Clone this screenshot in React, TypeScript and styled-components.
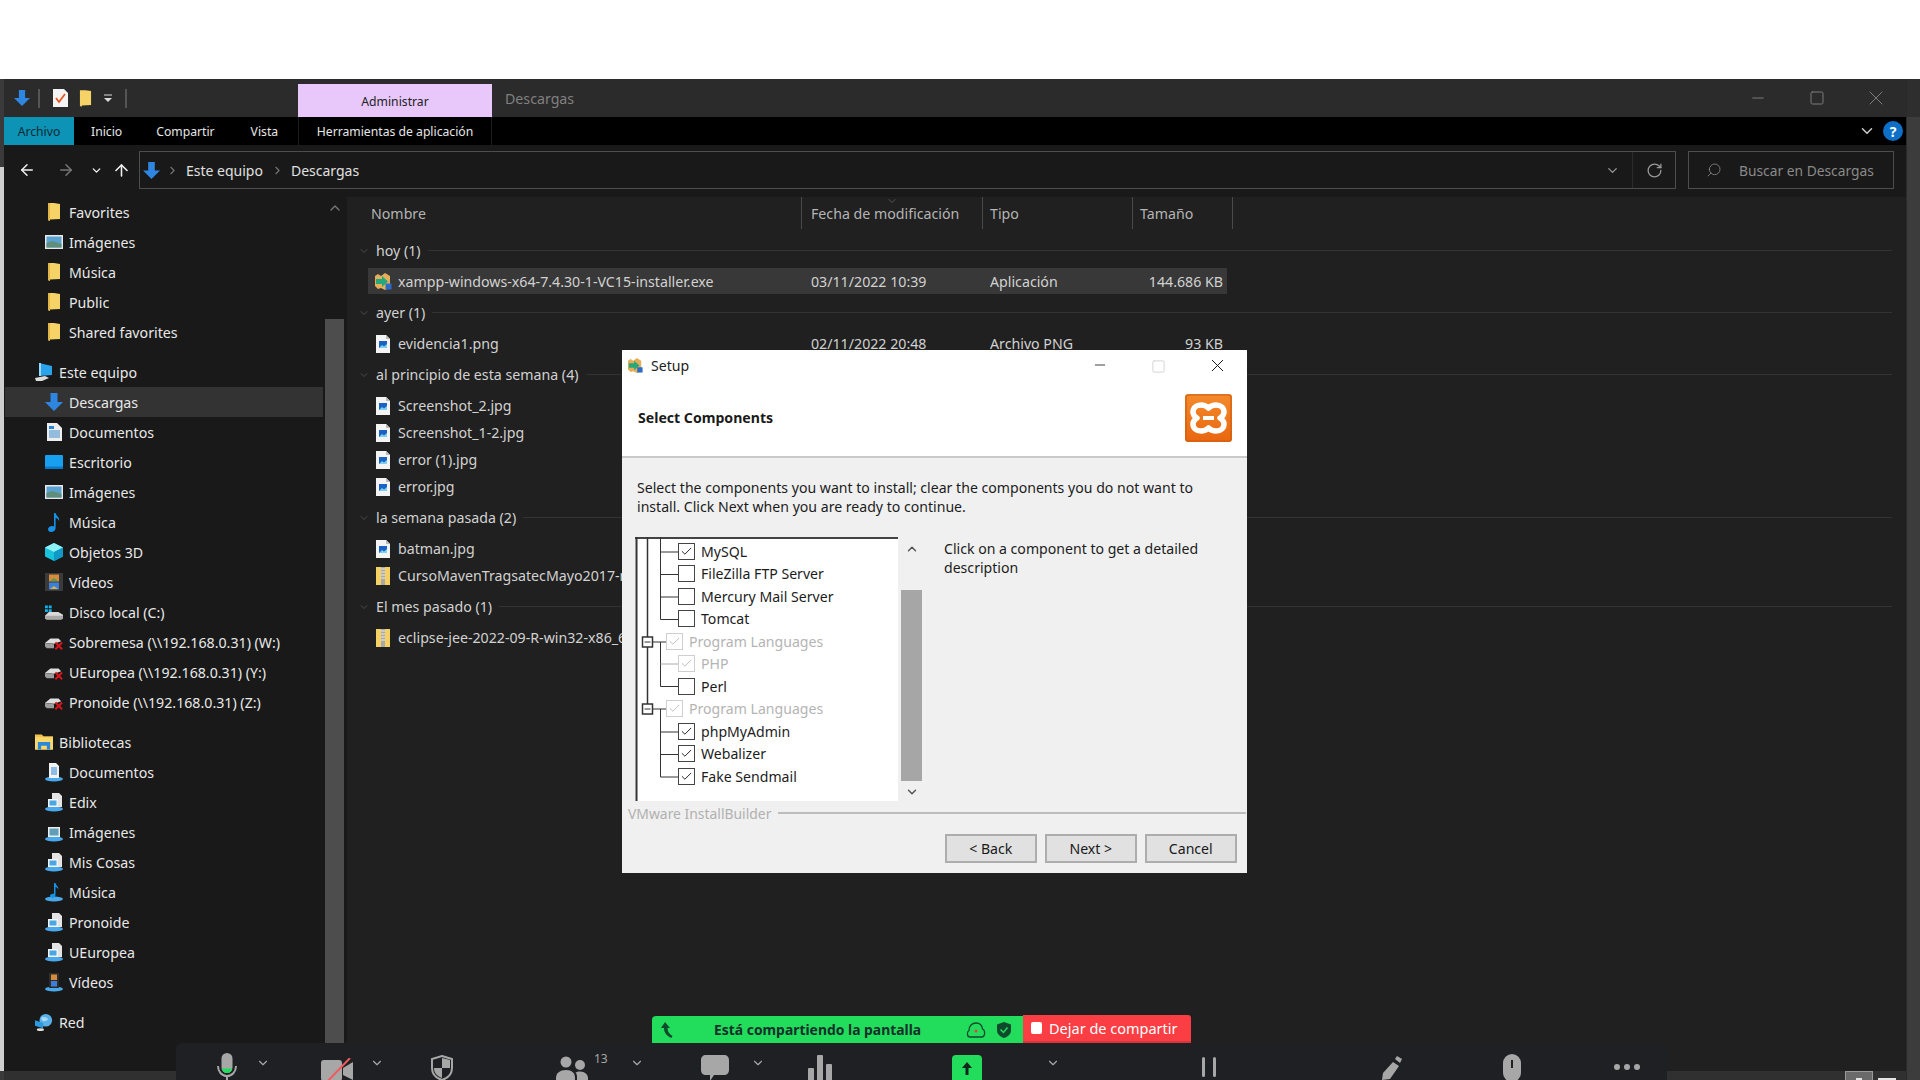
import React from 'react';
import styled, { createGlobalStyle } from 'styled-components';
import { ChevronDown, ChevronUp, ChevronRight, ArrowLeft, ArrowRight, ArrowUp, RotateCw, Search, Minus, Square, X, Check } from 'lucide-react';

const Global = createGlobalStyle`
  html, body { margin: 0; padding: 0; background: #fff; }
  * { box-sizing: border-box; }
  #root { width: 1920px; height: 1080px; }
`;
const FONT = `"Noto Sans", "Open Sans", sans-serif`;

const Page = styled.div`
  position: relative; width: 1920px; height: 1080px; overflow: hidden; background: #fff;
  font-family: ${FONT}; display: flex; flex-direction: column;
`;
const TopStrip = styled.div`height: 79px; flex: none; background: #fff;`;
const Desk = styled.div`flex: 1; display: flex; min-height: 0;`;
const LeftEdge = styled.div`
  width: 4px; flex: none;
  background: linear-gradient(#3a3a3a 0, #3a3a3a 88px, #cfcfcf 88px, #cfcfcf 992px, #3a3a3a 992px);
`;
const RightEdge = styled.div`
  width: 14px; flex: none; border-left: 1px solid #2a2a2a;
  background: linear-gradient(#2e2e2e 0, #2e2e2e 38px, #3c3c3c 38px);
`;
const Explorer = styled.div`flex: 1; display: flex; flex-direction: column; min-width: 0; background: #191919;`;

const TitleBar = styled.div`height: 38px; flex: none; background: #2b2b2b; display: flex; align-items: stretch;`;
const Quick = styled.div`width: 294px; flex: none; display: flex; align-items: center; padding-left: 10px;`;
const QSep = styled.div<{ $ml: number }>`width: 2px; height: 19px; background: #555; margin-left: ${p => p.$ml}px;`;
const QIcon = styled.div<{ $ml: number }>`margin-left: ${p => p.$ml}px; display: flex;`;
const AdminTab = styled.div`
  width: 194px; margin-top: 5px; background: #e8c8fa; color: #222; font-size: 12.2px;
  display: flex; align-items: center; justify-content: center; padding-top: 1px;
`;
const WinTitle = styled.div`margin-left: 13px; color: #808080; font-size: 14.2px; display: flex; align-items: center; flex: 1;`;
const WinBtn = styled.div`width: 59px; display: flex; align-items: center; justify-content: center; color: #7c7c7c;`;
const WinBtns = styled.div`display: flex; padding-right: 1px;`;

const Tabs = styled.div`height: 28px; flex: none; background: #000; display: flex; align-items: stretch; color: #e6e6e6; font-size: 12.2px; padding-right: 3px;`;
const FileTab = styled.div`width: 70px; background: #0c93b5; color: #0c2a33; display: flex; align-items: center; justify-content: center;`;
const TabList = styled.div`width: 224px; flex: none; display: flex;`;
const Tab = styled.div<{ $ml: number }>`margin-left: ${p => p.$ml}px; display: flex; align-items: center;`;
const ToolTab = styled.div`
  width: 194px; flex: none; border-left: 1px solid #1e1e1e; border-right: 1px solid #1e1e1e;
  display: flex; align-items: center; justify-content: center;
`;
const TabSpacer = styled.div`flex: 1;`;
const TabChevron = styled.div`display: flex; align-items: center; color: #ccc; margin-right: 7px;`;
const Help = styled.div`
  width: 20px; height: 20px; border-radius: 50%; background: #0d6fc8; color: #fff; font-weight: 700; font-size: 14px;
  align-self: center; display: flex; align-items: center; justify-content: center;
`;

const AddressBar = styled.div`height: 52px; flex: none; display: flex; padding-top: 6px; align-items: flex-start; padding-right: 12px;`;
const Nav = styled.div`width: 135px; flex: none; height: 38px; display: flex; align-items: center; color: #fff; padding-left: 14px;`;
const NavIcon = styled.div<{ $ml: number; $dim?: boolean }>`margin-left: ${p => p.$ml}px; display: flex; color: ${p => (p.$dim ? '#777' : '#f0f0f0')};`;
const AddrBox = styled.div`
  flex: 1; height: 38px; border: 1px solid #4d4d4d; display: flex; align-items: center; color: #e0e0e0; font-size: 14px; padding-left: 3px;
`;
const Crumb = styled.span`margin: 0 2px 0 0;`;
const CrumbSep = styled.span`display: flex; color: #777; margin: 0 7px 0 6px;`;
const AddrSpacer = styled.div`flex: 1;`;
const AddrBtn = styled.div<{ $w: number; $line?: boolean }>`
  width: ${p => p.$w}px; height: 100%; flex: none; display: flex; align-items: center; justify-content: center; color: #9a9a9a;
  ${p => (p.$line ? 'border-left: 1px solid #2c2c2c;' : '')}
`;
const SearchBox = styled.div`
  width: 206px; margin-left: 12px; height: 38px; border: 1px solid #4d4d4d; display: flex; align-items: center;
  color: #8a8a8a; font-size: 13.8px; padding-left: 17px; gap: 17px;
`;

const Main = styled.div`flex: 1; display: flex; min-height: 0;`;
const NavPane = styled.div`width: 321px; flex: none; padding: 0 2px 0 1px; display: flex; flex-direction: column; gap: 10px;`;
const NavGroup = styled.div`display: flex; flex-direction: column;`;
const NavRow = styled.div<{ $top?: boolean; $sel?: boolean }>`
  height: 30px; display: flex; align-items: center; color: #e8e8e8; font-size: 14.2px; white-space: nowrap;
  background: ${p => (p.$sel ? '#333' : 'transparent')};
  padding-left: ${p => (p.$top ? 30 : 40)}px;
`;
const NavGlyph = styled.div`width: 18px; height: 20px; flex: none; display: flex; align-items: center; justify-content: center; margin-right: 6px;`;
const NavScroll = styled.div`width: 19px; flex: none; display: flex; flex-direction: column; align-items: center; margin-right: 3px; color: #777; padding-top: 3px;`;
const ScrollThumb = styled.div`width: 100%; flex: 1; background: #4d4d4d; margin-top: 103px;`;

const Content = styled.div`flex: 1; background: #202020; display: flex; flex-direction: column; min-width: 0;`;
const Head = styled.div`height: 32px; flex: none; display: grid; grid-template-columns: 455px 181px 150px 100px; color: #b4b4b4; font-size: 14.2px;`;
const HeadCell = styled.div<{ $pl: number }>`
  position: relative; display: flex; align-items: center; padding-left: ${p => p.$pl}px;
  border-right: 1px solid #4a4a4a;
`;
const SortCaret = styled.div`position: absolute; top: -2px; left: 84px; color: #888; display: flex;`;
const Groups = styled.div`margin-top: 4px; display: flex; flex-direction: column;`;
const GroupHead = styled.div`height: 35px; display: flex; align-items: center; padding-left: 11px; padding-right: 14px; color: #d2d2d2; font-size: 14.2px;`;
const GroupChev = styled.div`display: flex; color: #666; margin-right: 6px;`;
const GroupLine = styled.div`flex: 1; height: 1px; background: #333; margin-left: 7px;`;
const FileRow = styled.div<{ $sel?: boolean }>`
  height: 27px; margin-left: 21px; width: 859px; display: grid; grid-template-columns: 434px 181px 150px 94px;
  align-items: center; color: #d2d2d2; font-size: 14.2px; white-space: nowrap;
  background: ${p => (p.$sel ? 'linear-gradient(#383838 0 26px, transparent 26px)' : 'transparent')};
`;
const FileName = styled.div`display: flex; align-items: center; padding-left: 8px; gap: 8px; overflow: hidden;`;
const FileGlyph = styled.div`width: 14px; flex: none; display: flex; justify-content: center;`;
const FileCell = styled.div<{ $pl?: number; $right?: boolean }>`
  padding-left: ${p => p.$pl ?? 0}px; ${p => (p.$right ? 'text-align: right; padding-right: 4px;' : '')}
`;

const StatusBar = styled.div`height: 9px; flex: none; background: #303030; display: flex; justify-content: flex-end; padding-right: 10px; gap: 5px;`;
const ViewBtn = styled.div<{ $on?: boolean }>`
  width: ${p => (p.$on ? 28 : 18)}px; background: ${p => (p.$on ? '#6a6a6a' : 'transparent')};
  border: ${p => (p.$on ? '1px solid #999' : 'none')}; border-bottom: none; display: flex; justify-content: center;
  padding-top: ${p => (p.$on ? 6 : 7)}px;
`;
const ViewMark = styled.div<{ $w: number }>`width: ${p => p.$w}px; height: 2px; background: #e4e4e4;`;

/* Setup dialog: a window floating on the desktop */
const Dialog = styled.div`
  position: absolute; left: 622px; top: 350px; width: 625px; height: 523px; background: #f0f0f0;
  display: flex; flex-direction: column; color: #1c1c1c; font-size: 14.1px;
`;
const DlgTitle = styled.div`height: 32px; flex: none; background: #fff; display: flex; align-items: center; padding: 0 0 2px 6px; color: #222;`;
const DlgTitleText = styled.div`margin-left: 8px; flex: 1;`;
const DlgBtn = styled.div<{ $dim?: boolean }>`
  width: 59px; display: flex; justify-content: center; color: ${p => (p.$dim ? '#c8c8c8' : '#111')};
  ${p => (p.$dim ? 'margin-top: 2px;' : '')}
`;
const DlgBtns = styled.div`display: flex; align-items: center;`;
const DlgHeader = styled.div`height: 76px; flex: none; background: #fff; border-bottom: 2px solid #c9c9c9; display: flex; padding: 12px 15px 0 16px; justify-content: space-between; align-items: flex-start;`;
const DlgHeading = styled.div`font-weight: 700; margin-top: 14px; color: #1a1a1a;`;
const DlgIntro = styled.div`padding: 20px 0 0 15px; line-height: 19px; height: 79px; flex: none; white-space: nowrap;`;
const DlgMid = styled.div`display: flex; height: 264px; flex: none; padding-left: 13px;`;
const TreeBox = styled.div`
  position: relative; width: 263px; flex: none; background: #fff; padding: 1px 0 0 0;
  border-top: 2px solid #444;
`;
const TreeLines = styled.svg`position: absolute; left: 0; top: -2px;`;
const TreeRow = styled.div<{ $group?: boolean; $off?: boolean }>`
  height: 22.5px; display: flex; align-items: center; gap: 6px; padding-left: ${p => (p.$group ? 31 : 43)}px;
  color: ${p => (p.$off ? '#b4b4b4' : '#1c1c1c')}; position: relative;
`;
const Tick = styled.div<{ $off?: boolean }>`
  width: 17px; height: 17px; flex: none; border: 1.5px solid ${p => (p.$off ? '#cfcfcf' : '#444')}; background: #fff;
  display: flex; align-items: center; justify-content: center; color: ${p => (p.$off ? '#bdbdbd' : '#222')};
`;
const TreeScroll = styled.div`width: 21px; margin-left: 3px; flex: none; display: flex; flex-direction: column; align-items: center; color: #555;`;
const TreeThumb = styled.div`width: 100%; height: 191px; flex: none; background: #a6a6a6; margin: 34px 0 4px;`;
const TreeDesc = styled.div`margin-left: 22px; padding-top: 3px; line-height: 18.5px; width: 290px;`;
const DlgFoot = styled.div`display: flex; align-items: center; padding: 1px 0 0 6px; color: #b0b0b0; height: 24px; flex: none; font-size: 13.9px;`;
const DlgFootLine = styled.div`flex: 1; height: 2px; background: #bdbdbd; margin: 0 1px 1px 7px;`;
const DlgBtnRow = styled.div`display: flex; justify-content: flex-end; gap: 7.5px; padding: 9px 10px 0 0;`;
const DlgButton = styled.div`
  width: 92.5px; height: 29px; background: #e1e1e1; border: 2px solid #adadad; display: flex; align-items: center; justify-content: center; color: #1a1a1a;
`;

/* Meeting share controls floating over the screen */
const ShareBanner = styled.div`position: absolute; left: 652px; top: 1015px; height: 28px; display: flex;`;
const ShareGreen = styled.div`
  width: 371px; margin-top: 1px; background: #22dc5c; border-top-left-radius: 4px; display: flex; align-items: center; color: #15302a;
  font-weight: 700; font-size: 13.9px; padding-left: 8px;
`;
const ShareText = styled.div`margin-left: 40px; flex: 1; white-space: nowrap;`;
const ShareMark = styled.div<{ $mr: number }>`display: flex; margin-right: ${p => p.$mr}px;`;
const ShareRed = styled.div`
  width: 168px; background: #fb3d44; border-bottom: 2px solid #d9363c; border-top-right-radius: 3px; display: flex; align-items: center; color: #fff;
  font-size: 14.5px; padding-left: 8px; gap: 7px;
`;
const StopDot = styled.div`width: 11px; height: 12px; border-radius: 2px; background: #fff; flex: none;`;

const Meeting = styled.div`
  position: absolute; left: 176px; top: 1043px; width: 1491px; height: 37px; background: #1f2023; border-radius: 6px 6px 0 0;
  display: flex; align-items: flex-start; padding-left: 39px; overflow: hidden; color: #a7a7a7;
`;
const Tool = styled.div<{ $ml?: number; $t: number }>`
  margin-left: ${p => p.$ml ?? 0}px; margin-top: ${p => p.$t}px; flex: none; display: flex; color: #a7a7a7; font-size: 12px; line-height: 1;
`;
const ShareTool = styled.div`
  margin-left: 120px; margin-top: 12px; width: 30px; height: 30px; border-radius: 4px; background: #22dc5c; color: #10251c;
  display: flex; justify-content: center; padding-top: 4px; flex: none;
`;

const PinFolder = () => (
  <svg width="14" height="18" viewBox="0 0 14 18"><path d="M1 0h6l6 1v15l-10 0.500L3 18 1 17z" fill="#f6d367" /><path d="M1 0h2v18l-2-1z" fill="#e2b548" /></svg>
);
const Folder = ({ w = 14, h = 18 }: { w?: number; h?: number }) => (
  <svg width={w} height={h} viewBox="0 0 14 18"><path d="M1 0h6l6 1v15l-10 0.500L3 18 1 17z" fill="#f6d367" /></svg>
);
const BlueArrow = ({ s = 18 }: { s?: number }) => (
  <svg width={s} height={s} viewBox="0 0 18 18"><path d="M5.500 0h7v9H18l-9 9-9-9h5.500z" fill="#2f86e0" /></svg>
);
const Picture = () => (
  <svg width="18" height="14" viewBox="0 0 18 14"><rect width="18" height="14" fill="#e8e8e8" /><rect x="1.500" y="1.500" width="15" height="11" fill="#5aa2cf" /><path d="M1.500 8l6-2 9 3v3.500h-15z" fill="#5f8f7c" /></svg>
);
const DocPage = () => (
  <svg width="15" height="18" viewBox="0 0 15 18"><path d="M0 0h10l5 5v13H0z" fill="#eee" /><path d="M2 3h5v3H2z" fill="#2b86d6" /><path d="M2 8h11M2 10h11M2 12h11M2 14h11" stroke="#3a8ad0" strokeWidth="1" /></svg>
);
const Desktop = () => (
  <svg width="18" height="14" viewBox="0 0 18 14"><rect width="18" height="14" rx="1" fill="#18a0f0" /><rect y="11.500" width="18" height="2.500" fill="#0a78c8" /></svg>
);
const Note = () => (
  <svg width="12" height="19" viewBox="0 0 12 19"><path d="M6 0h1.600c.3 3 4.400 4 3.600 8-.8-2-2.400-2.800-3.600-3V15c0 2.400-2.200 4-4.400 4C1.200 19 0 17.800 0 16.200c0-2 2.200-3.500 4.200-3.300.7 0 1.300.2 1.800.5z" fill="#1693e6" /></svg>
);
const Cube = () => (
  <svg width="18" height="18" viewBox="0 0 18 18"><path d="M9 0l9 4.500v9L9 18 0 13.500v-9z" fill="#19c3dc" /><path d="M9 0l9 4.500-9 4.500-9-4.500z" fill="#8ff0f5" /><path d="M9 9l9-4.500v9L9 18z" fill="#1098c6" /></svg>
);
const Film = () => (
  <svg width="18" height="18" viewBox="0 0 18 18"><rect width="18" height="18" fill="#3a3a3a" /><rect x="4" y="1.500" width="10" height="7" fill="#d68a3c" /><rect x="4" y="9.500" width="10" height="7" fill="#3c7fd6" /><path d="M5 8l4-3 4 3z" fill="#4c9c5a" /><path d="M5 16l4-3 4 3z" fill="#d9b24a" /></svg>
);
const Disk = () => (
  <svg width="19" height="15" viewBox="0 0 19 15"><path d="M4 7h10l5 3v4l-2 1H2l-2-1v-3z" fill="#d9d9d9" /><path d="M0 11h19v3l-2 1H2l-2-1z" fill="#a9a9a9" /><path d="M0 0h3v3H0zM4 0h3v3H4zM0 4h3v3H0zM4 4h3v3H4z" fill="#10b4f0" /></svg>
);
const NetDisk = () => (
  <svg width="20" height="17" viewBox="0 0 20 17">
    <path d="M0 9l6-5h9l3 3-8 3z" fill="#dedede" />
    <path d="M0 9l10 1.500V15H2l-2-2z" fill="#9c9c9c" />
    <path d="M11.500 8.500l7.500 7.500M19 8.500L11.500 16" stroke="#d8141c" strokeWidth="2.200" />
  </svg>
);
const LibFolder = () => (
  <svg width="19" height="16" viewBox="0 0 19 16"><path d="M0 0h7l2 2h10v14H0z" fill="#f0c24e" /><path d="M0 3h19v13H0z" fill="#fbd86d" /><path d="M3 8h13v8h-3.500v-4h-6v4H3z" fill="#2a8ad8" /></svg>
);
const Pc = () => (
  <svg width="18" height="20" viewBox="0 0 18 20"><path d="M4 1l13 3v9l-13 1z" fill="#29a3ea" /><path d="M4 1l2 0v13H4z" fill="#9bd8f8" /><path d="M0 16l10-2 4 2-7 3H1z" fill="#dcdcdc" /></svg>
);
const Lib = ({ kind }: { kind: 'doc' | 'page' | 'pic' | 'music' | 'film' }) => (
  <svg width="18" height="19" viewBox="0 0 18 19">
    <ellipse cx="9" cy="16" rx="9" ry="2.600" fill="#4aa9ea" />
    {kind === 'doc' && <><path d="M4 0h7l3 3v12H4z" fill="#f2f2f2" /><path d="M6 5h6M6 7h6M6 9h6M6 11h6" stroke="#2b86d6" /></>}
    {kind === 'page' && <><path d="M7 0h7l3 3v11H7z" fill="#e4e4e4" /><rect x="3" y="6" width="10" height="8" fill="#f4f4f4" /><rect x="4.500" y="7.500" width="7" height="5" fill="#4ba6e4" /></>}
    {kind === 'pic' && <><rect x="3" y="4" width="12" height="10" fill="#eee" /><rect x="4.500" y="5.500" width="9" height="7" fill="#5f9fb8" /></>}
    {kind === 'music' && <path d="M9 0h1.500c.3 2.500 3 3 3 6.500-.7-1.500-2-2.300-3-2.500V12c0 1.800-1.600 3-3.300 3C6 15 5 14 5 12.800c0-1.500 2-2.600 4-2z" fill="#1693e6" />}
    {kind === 'film' && <><rect x="4" y="0" width="10" height="15" fill="#2d2d2d" /><rect x="6" y="1.500" width="6" height="5.500" fill="#d68a3c" /><rect x="6" y="8" width="6" height="5.500" fill="#3c7fd6" /></>}
  </svg>
);
const Globe = () => (
  <svg width="20" height="19" viewBox="0 0 20 19"><circle cx="12" cy="7" r="7" fill="#5ab0e8" /><path d="M8 3c2 1 5 0 6 2s-2 3-4 3-4-3-2-5z" fill="#a8dcf5" /><path d="M0 7l9 3v6L0 13z" fill="#2b9ae0" /><ellipse cx="6" cy="17.500" rx="4" ry="1.500" fill="#ddd" /></svg>
);
const ImgFile = () => (
  <svg width="14" height="18" viewBox="0 0 14 18"><path d="M0 0h10l4 4v14H0z" fill="#f4f4f4" /><path d="M10 0l4 4h-4z" fill="#bbb" /><rect x="3" y="6" width="8" height="7" fill="#1a63c4" /><path d="M3 13l3-3 2 1.500L11 9v4z" fill="#7fd0f0" /></svg>
);
const ZipFile = () => (
  <svg width="14" height="18" viewBox="0 0 14 18"><path d="M0 0h14v18H0z" fill="#f5d062" /><rect x="5" width="4" height="18" fill="#a8a8a8" /><path d="M5 2h4M5 5h4M5 8h4M5 11h4" stroke="#eee" strokeWidth="1" /></svg>
);
const Xampp = ({ s = 17 }: { s?: number }) => (
  <svg width={s} height={s} viewBox="0 0 17 17" style={{ flex: 'none' }}>
    <path d="M3 1l3 2 4-3 5 3v12l-5 2-4-2-3 1-3-3V3z" fill="#e4ae5a" />
    <path d="M1 6h6V3l6 5.500L7 14v-3H1z" fill="#27a87a" />
    <rect x="10.500" y="10.500" width="6" height="6" fill="#2a6cc8" />
  </svg>
);
const XamppLogo = () => (
  <svg width="47" height="48" viewBox="0 0 47 48" style={{ flex: 'none' }}>
    <defs>
      <linearGradient id="xamppFill" x1="0" y1="0" x2="0" y2="1">
        <stop offset="0" stopColor="#f48a2c" />
        <stop offset="1" stopColor="#e8660f" />
      </linearGradient>
    </defs>
    <rect width="47" height="48" rx="3" fill="url(#xamppFill)" />
    <rect x="1" y="1" width="45" height="46" rx="2.500" fill="none" stroke="#cf5f12" strokeWidth="1.200" />
    <path d="M16 11c-5 0-8 3-8 7 0 3 1.500 4.500 4 6-2.500 1.500-4 3-4 6 0 4 3 7 8 7 3 0 5.500-1 7.500-3 2 2 4.500 3 7.500 3 5 0 8-3 8-7 0-3-1.500-4.500-4-6 2.500-1.500 4-3 4-6 0-4-3-7-8-7-3 0-5.500 1-7.500 3-2-2-4.500-3-7.500-3z" fill="none" stroke="#fff" strokeWidth="5.500" strokeLinejoin="round" />
    <path d="M18 24h11" stroke="#fff" strokeWidth="4" />
  </svg>
);
const CheckDoc = () => (
  <svg width="15" height="18" viewBox="0 0 15 18"><path d="M0 0h11l4 4v14H0z" fill="#f4f4f4" /><path d="M3 9l3 4 6-8" fill="none" stroke="#e85a20" strokeWidth="1.800" /></svg>
);
const TinyDrop = () => (
  <svg width="8" height="9" viewBox="0 0 8 9"><path d="M0 1h8" stroke="#ddd" strokeWidth="1" /><path d="M0 4h8L4 8z" fill="#ddd" /></svg>
);
const Mic = () => (
  <svg width="24" height="30" viewBox="0 0 24 30">
    <rect x="6.500" y="0" width="11" height="20" rx="5.500" fill="#a7a7a7" />
    <path d="M7 15.500h10c0 2.500-2 4.500-5 4.500s-5-2-5-4.500z" fill="#22dc5c" />
    <path d="M3 13c0 6 4 10 9 10s9-4 9-10M12 23v7" fill="none" stroke="#a7a7a7" strokeWidth="2" />
  </svg>
);
const CamOff = () => (
  <svg width="34" height="28" viewBox="0 0 34 28">
    <rect x="1" y="2" width="21" height="21" rx="3" fill="#a7a7a7" />
    <path d="M23 10l10-6v18l-10-5z" fill="#a7a7a7" />
    <path d="M3 28L30 0" stroke="#f05a5a" strokeWidth="2" />
  </svg>
);
const Shield = () => (
  <svg width="24" height="26" viewBox="0 0 24 26">
    <path d="M12 1l10 3v9c0 6-4 10-10 12C6 23 2 19 2 13V4z" fill="none" stroke="#a7a7a7" strokeWidth="2" />
    <path d="M12 3v10H4c0 5 3 8 8 10V13h8V5z" fill="#a7a7a7" />
  </svg>
);
const People = () => (
  <svg width="34" height="26" viewBox="0 0 34 26">
    <circle cx="10" cy="6" r="5.500" fill="#a7a7a7" /><circle cx="24" cy="9" r="5" fill="#a7a7a7" />
    <path d="M0 26v-4c0-5 4-8 10-8 6 0 9 3 9 8v4z" fill="#a7a7a7" /><path d="M21 26v-5c0-2-.5-3.500-1.500-4.500 1-.5 3-1 4.500-1 5 0 8 3 8 6.500v4z" fill="#a7a7a7" />
  </svg>
);
const Chat = () => (
  <svg width="28" height="26" viewBox="0 0 28 26"><path d="M5 0h18c3 0 5 2 5 5v10c0 3-2 5-5 5H13l-4 6v-6H5c-3 0-5-2-5-5V5c0-3 2-5 5-5z" fill="#a7a7a7" /></svg>
);
const Bars = () => (
  <svg width="24" height="26" viewBox="0 0 24 26"><rect x="0" y="13" width="6" height="13" rx="1" fill="#a7a7a7" /><rect x="9" y="0" width="6" height="26" rx="1" fill="#a7a7a7" /><rect x="18" y="9" width="6" height="17" rx="1" fill="#a7a7a7" /></svg>
);
const ShareArrow = () => (
  <svg width="14" height="20" viewBox="0 0 14 20"><path d="M7 3l5 6H8.500v7h-3V9H2z" fill="currentColor" /></svg>
);
const Pen = () => (
  <svg width="24" height="24" viewBox="0 0 24 24"><path d="M15 6l6 4-9 13-8 1 1-7z" fill="#a7a7a7" /><path d="M17 3l2-3 5 3-2 4z" fill="#a7a7a7" /></svg>
);
const MouseIcon = () => (
  <svg width="18" height="28" viewBox="0 0 18 28"><rect width="18" height="28" rx="9" fill="#a7a7a7" /><rect x="8" y="6" width="2" height="8" fill="#1f2023" /></svg>
);
const Dots = () => (
  <svg width="26" height="6" viewBox="0 0 26 6"><circle cx="3" cy="3" r="3" fill="#a7a7a7" /><circle cx="13" cy="3" r="3" fill="#a7a7a7" /><circle cx="23" cy="3" r="3" fill="#a7a7a7" /></svg>
);
const PauseBars = () => (
  <svg width="14" height="20" viewBox="0 0 14 20"><rect x="0" width="3" height="20" rx="1.500" fill="#a7a7a7" /><rect x="11" width="3" height="20" rx="1.500" fill="#a7a7a7" /></svg>
);
const PinArrow = () => (
  <svg width="14" height="16" viewBox="0 0 14 16" style={{ flex: 'none' }}><path d="M5 0l5 6H7.500c0 4 2 6 5 8l-1 2C7 14 4 11 4 6H1z" fill="#0f4a2c" /></svg>
);
const Cloud = () => (
  <svg width="20" height="16" viewBox="0 0 20 16"><path d="M4 15c-3 0-3.500-5-1-6.500C3 4 6 1 10 1c3 0 6 2 6.500 6 3 1 3 8-1 8z" fill="none" stroke="#0f4a2c" strokeWidth="1.300" /><circle cx="10" cy="9" r="1.500" fill="#e84040" /></svg>
);
const TinyShield = () => (
  <svg width="14" height="16" viewBox="0 0 14 16"><path d="M7 0l7 2.500v6C14 12 11 14.500 7 16 3 14.500 0 12 0 8.500v-6z" fill="#0f4a2c" /><path d="M3.500 7.500l3 3 4-5" fill="none" stroke="#22dc5c" strokeWidth="1.500" /></svg>
);

type NavItem = { label: string; icon: React.ReactNode; top?: boolean; sel?: boolean };
const navGroups: NavItem[][] = [
  [
    { label: 'Favorites', icon: <PinFolder /> },
    { label: 'Imágenes', icon: <Picture /> },
    { label: 'Música', icon: <PinFolder /> },
    { label: 'Public', icon: <PinFolder /> },
    { label: 'Shared favorites', icon: <PinFolder /> },
  ],
  [
    { label: 'Este equipo', icon: <Pc />, top: true },
    { label: 'Descargas', icon: <BlueArrow />, sel: true },
    { label: 'Documentos', icon: <DocPage /> },
    { label: 'Escritorio', icon: <Desktop /> },
    { label: 'Imágenes', icon: <Picture /> },
    { label: 'Música', icon: <Note /> },
    { label: 'Objetos 3D', icon: <Cube /> },
    { label: 'Vídeos', icon: <Film /> },
    { label: 'Disco local (C:)', icon: <Disk /> },
    { label: 'Sobremesa (\\\\192.168.0.31) (W:)', icon: <NetDisk /> },
    { label: 'UEuropea (\\\\192.168.0.31) (Y:)', icon: <NetDisk /> },
    { label: 'Pronoide (\\\\192.168.0.31) (Z:)', icon: <NetDisk /> },
  ],
  [
    { label: 'Bibliotecas', icon: <LibFolder />, top: true },
    { label: 'Documentos', icon: <Lib kind="doc" /> },
    { label: 'Edix', icon: <Lib kind="page" /> },
    { label: 'Imágenes', icon: <Lib kind="pic" /> },
    { label: 'Mis Cosas', icon: <Lib kind="page" /> },
    { label: 'Música', icon: <Lib kind="music" /> },
    { label: 'Pronoide', icon: <Lib kind="page" /> },
    { label: 'UEuropea', icon: <Lib kind="page" /> },
    { label: 'Vídeos', icon: <Lib kind="film" /> },
  ],
  [{ label: 'Red', icon: <Globe />, top: true }],
];

type FileItem = { name: string; icon: React.ReactNode; date?: string; type?: string; size?: string; sel?: boolean };
const groups: { title: string; files: FileItem[] }[] = [
  { title: 'hoy (1)', files: [{ name: 'xampp-windows-x64-7.4.30-1-VC15-installer.exe', icon: <Xampp />, date: '03/11/2022 10:39', type: 'Aplicación', size: '144.686 KB', sel: true }] },
  { title: 'ayer (1)', files: [{ name: 'evidencia1.png', icon: <ImgFile />, date: '02/11/2022 20:48', type: 'Archivo PNG', size: '93 KB' }] },
  { title: 'al principio de esta semana (4)', files: [
    { name: 'Screenshot_2.jpg', icon: <ImgFile /> },
    { name: 'Screenshot_1-2.jpg', icon: <ImgFile /> },
    { name: 'error (1).jpg', icon: <ImgFile /> },
    { name: 'error.jpg', icon: <ImgFile /> },
  ] },
  { title: 'la semana pasada (2)', files: [
    { name: 'batman.jpg', icon: <ImgFile /> },
    { name: 'CursoMavenTragsatecMayo2017-r', icon: <ZipFile /> },
  ] },
  { title: 'El mes pasado (1)', files: [{ name: 'eclipse-jee-2022-09-R-win32-x86_64.zip', icon: <ZipFile /> }] },
];

const tree: { label: string; group?: boolean; off?: boolean; on?: boolean }[] = [
  { label: 'MySQL', on: true },
  { label: 'FileZilla FTP Server' },
  { label: 'Mercury Mail Server' },
  { label: 'Tomcat' },
  { label: 'Program Languages', group: true, off: true, on: true },
  { label: 'PHP', off: true, on: true },
  { label: 'Perl' },
  { label: 'Program Languages', group: true, off: true, on: true },
  { label: 'phpMyAdmin', on: true },
  { label: 'Webalizer', on: true },
  { label: 'Fake Sendmail', on: true },
];

const Connectors = () => (
  <TreeLines width="263" height="264" viewBox="0 0 263 264" fill="none" stroke="#333" strokeWidth="1">
    <path d="M1.500 0V264" strokeWidth="2" />
    <path d="M12.500 0V172" strokeWidth="1.500" />
    <path d="M25.500 0V82.500M25.500 15H43M25.500 37.500H43M25.500 60H43M25.500 82.500H43" />
    <path d="M25.500 105V149.500M25.500 149.500H43" />
    <path d="M25.500 127H43" stroke="#aaa" />
    <path d="M25.500 172V240M25.500 195H43M25.500 217.500H43M25.500 240H43" />
    <path d="M18 105H31M18 172H31" />
    <rect x="7.500" y="100" width="10" height="10" fill="#fff" strokeWidth="1.500" />
    <path d="M9.500 105H15.500" />
    <rect x="7.500" y="167" width="10" height="10" fill="#fff" strokeWidth="1.500" />
    <path d="M9.500 172H15.500" />
  </TreeLines>
);

export default function App() {
  return (
    <Page>
      <Global />
      <TopStrip />
      <Desk>
        <LeftEdge />
        <Explorer>
          <TitleBar>
            <Quick>
              <BlueArrow s={16} />
              <QSep $ml={8} />
              <QIcon $ml={13}><CheckDoc /></QIcon>
              <QIcon $ml={11}><Folder w={13} h={17} /></QIcon>
              <QIcon $ml={12}><TinyDrop /></QIcon>
              <QSep $ml={13} />
            </Quick>
            <AdminTab>Administrar</AdminTab>
            <WinTitle>Descargas</WinTitle>
            <WinBtns>
              <WinBtn><Minus size={18} strokeWidth={1.300} /></WinBtn>
              <WinBtn><Square size={16} strokeWidth={1.500} /></WinBtn>
              <WinBtn><X size={24} strokeWidth={1} /></WinBtn>
            </WinBtns>
          </TitleBar>
          <Tabs>
            <FileTab>Archivo</FileTab>
            <TabList>
              <Tab $ml={17}>Inicio</Tab>
              <Tab $ml={34}>Compartir</Tab>
              <Tab $ml={36}>Vista</Tab>
            </TabList>
            <ToolTab>Herramientas de aplicación</ToolTab>
            <TabSpacer />
            <TabChevron><ChevronDown size={18} strokeWidth={2} /></TabChevron>
            <Help>?</Help>
          </Tabs>
          <AddressBar>
            <Nav>
              <NavIcon $ml={0}><ArrowLeft size={18} strokeWidth={2} /></NavIcon>
              <NavIcon $ml={21} $dim><ArrowRight size={18} strokeWidth={2} /></NavIcon>
              <NavIcon $ml={15}><ChevronDown size={13} strokeWidth={2.500} /></NavIcon>
              <NavIcon $ml={9}><ArrowUp size={19} strokeWidth={2} /></NavIcon>
            </Nav>
            <AddrBox>
              <BlueArrow s={17} />
              <CrumbSep><ChevronRight size={13} /></CrumbSep>
              <Crumb>Este equipo</Crumb>
              <CrumbSep><ChevronRight size={13} /></CrumbSep>
              <Crumb>Descargas</Crumb>
              <AddrSpacer />
              <AddrBtn $w={40}><ChevronDown size={15} strokeWidth={2} /></AddrBtn>
              <AddrBtn $w={43} $line><RotateCw size={17} strokeWidth={1.800} /></AddrBtn>
            </AddrBox>
            <SearchBox><Search size={16} strokeWidth={1.200} style={{ transform: 'scaleX(-1)' }} />Buscar en Descargas</SearchBox>
          </AddressBar>
          <Main>
            <NavPane>
              {navGroups.map((g, i) => (
                <NavGroup key={i}>
                  {g.map((n, j) => (
                    <NavRow key={j} $top={n.top} $sel={n.sel}>
                      <NavGlyph>{n.icon}</NavGlyph>
                      {n.label}
                    </NavRow>
                  ))}
                </NavGroup>
              ))}
            </NavPane>
            <NavScroll>
              <ChevronUp size={16} strokeWidth={2} />
              <ScrollThumb />
            </NavScroll>
            <Content>
              <Head>
                <HeadCell $pl={24}>Nombre</HeadCell>
                <HeadCell $pl={9}>
                  <SortCaret><ChevronDown size={12} strokeWidth={1} /></SortCaret>
                  Fecha de modificación
                </HeadCell>
                <HeadCell $pl={7}>Tipo</HeadCell>
                <HeadCell $pl={7}>Tamaño</HeadCell>
              </Head>
              <Groups>
                {groups.map((g, i) => (
                  <React.Fragment key={i}>
                    <GroupHead>
                      <GroupChev><ChevronDown size={12} strokeWidth={1.200} /></GroupChev>
                      {g.title}
                      <GroupLine />
                    </GroupHead>
                    {g.files.map((f, j) => (
                      <FileRow key={j} $sel={f.sel}>
                        <FileName><FileGlyph>{f.icon}</FileGlyph>{f.name}</FileName>
                        <FileCell $pl={9}>{f.date}</FileCell>
                        <FileCell $pl={7}>{f.type}</FileCell>
                        <FileCell $right>{f.size}</FileCell>
                      </FileRow>
                    ))}
                  </React.Fragment>
                ))}
              </Groups>
            </Content>
          </Main>
          <StatusBar>
            <ViewBtn $on><ViewMark $w={6} /></ViewBtn>
            <ViewBtn><ViewMark $w={18} /></ViewBtn>
          </StatusBar>
        </Explorer>
        <RightEdge />
      </Desk>

      <Dialog>
        <DlgTitle>
          <Xampp s={15} />
          <DlgTitleText>Setup</DlgTitleText>
          <DlgBtns>
            <DlgBtn><Minus size={16} strokeWidth={1.200} /></DlgBtn>
            <DlgBtn $dim><Square size={15} strokeWidth={1.200} /></DlgBtn>
            <DlgBtn><X size={21} strokeWidth={1.100} /></DlgBtn>
          </DlgBtns>
        </DlgTitle>
        <DlgHeader>
          <DlgHeading>Select Components</DlgHeading>
          <XamppLogo />
        </DlgHeader>
        <DlgIntro>
          Select the components you want to install; clear the components you do not want to
          <br />
          install. Click Next when you are ready to continue.
        </DlgIntro>
        <DlgMid>
          <TreeBox>
            <Connectors />
            {tree.map((t, i) => (
              <TreeRow key={i} $group={t.group} $off={t.off}>
                <Tick $off={t.off}>{t.on && <Check size={13} strokeWidth={1.800} />}</Tick>
                {t.label}
              </TreeRow>
            ))}
          </TreeBox>
          <TreeScroll>
            <ChevronUp size={14} strokeWidth={2.500} style={{ marginTop: 5 }} />
            <TreeThumb />
            <ChevronDown size={14} strokeWidth={2.500} />
          </TreeScroll>
          <TreeDesc>Click on a component to get a detailed description</TreeDesc>
        </DlgMid>
        <DlgFoot>
          VMware InstallBuilder
          <DlgFootLine />
        </DlgFoot>
        <DlgBtnRow>
          <DlgButton>&lt; Back</DlgButton>
          <DlgButton>Next &gt;</DlgButton>
          <DlgButton>Cancel</DlgButton>
        </DlgBtnRow>
      </Dialog>

      <ShareBanner>
        <ShareGreen>
          <PinArrow />
          <ShareText>Está compartiendo la pantalla</ShareText>
          <ShareMark $mr={11}><Cloud /></ShareMark>
          <ShareMark $mr={12}><TinyShield /></ShareMark>
        </ShareGreen>
        <ShareRed><StopDot />Dejar de compartir</ShareRed>
      </ShareBanner>

      <Meeting>
        <Tool $t={10}><Mic /></Tool>
        <Tool $ml={17} $t={13}><ChevronDown size={14} strokeWidth={2} /></Tool>
        <Tool $ml={50} $t={15}><CamOff /></Tool>
        <Tool $ml={16} $t={13}><ChevronDown size={14} strokeWidth={2} /></Tool>
        <Tool $ml={46} $t={12}><Shield /></Tool>
        <Tool $ml={102} $t={13}><People /></Tool>
        <Tool $ml={4} $t={10}>13</Tool>
        <Tool $ml={22} $t={13}><ChevronDown size={14} strokeWidth={2} /></Tool>
        <Tool $ml={57} $t={12}><Chat /></Tool>
        <Tool $ml={22} $t={13}><ChevronDown size={14} strokeWidth={2} /></Tool>
        <Tool $ml={43} $t={12}><Bars /></Tool>
        <ShareTool><ShareArrow /></ShareTool>
        <Tool $ml={64} $t={13}><ChevronDown size={14} strokeWidth={2} /></Tool>
        <Tool $ml={142} $t={14}><PauseBars /></Tool>
        <Tool $ml={162} $t={13}><Pen /></Tool>
        <Tool $ml={101} $t={11}><MouseIcon /></Tool>
        <Tool $ml={93} $t={21}><Dots /></Tool>
      </Meeting>
    </Page>
  );
}
